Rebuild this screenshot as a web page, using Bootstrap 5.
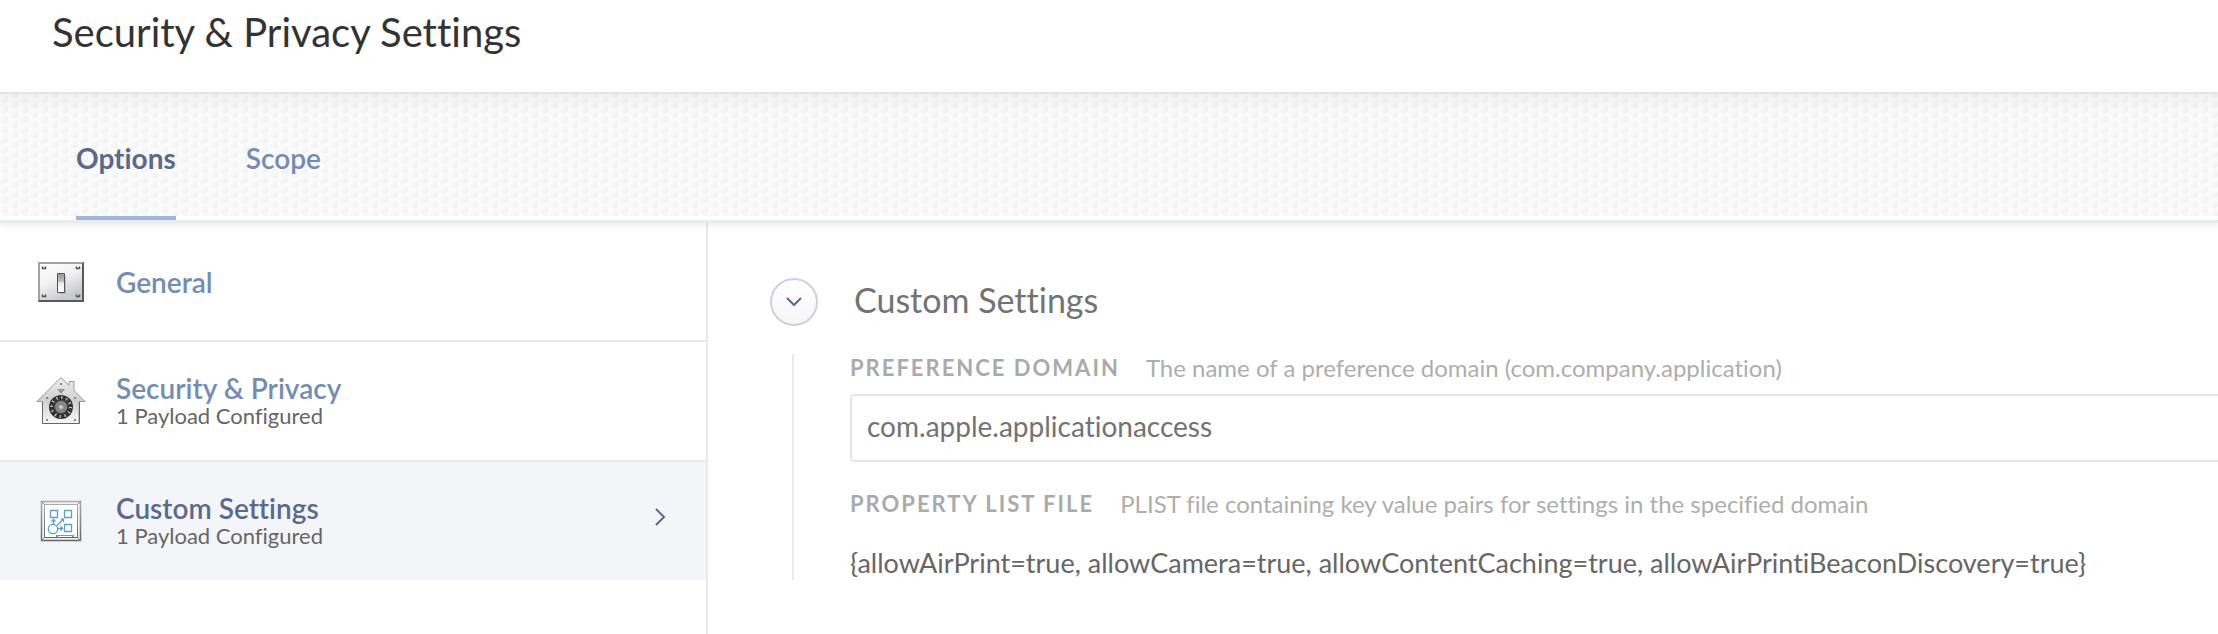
<!DOCTYPE html>
<html lang="en">
<head>
<meta charset="utf-8">
<meta name="viewport" content="width=device-width, initial-scale=1">
<title>Security &amp; Privacy Settings</title>
<link rel="stylesheet" href="https://cdn.jsdelivr.net/npm/bootstrap@5.3.0/dist/css/bootstrap.min.css">
<style>
body { font-family: Lato, "Open Sans", sans-serif; font-variant-ligatures: none; color: #666; background: #fff; }
.page-head { height: 94px; padding: 0 52px; border-bottom: 2px solid #e4e6ea; }
.page-head h1 { font-size: 40px; line-height: 64px; color: #333; font-weight: 400; }
.tab-strip {
  height: 129px; padding: 0 76px; gap: 70px; border-bottom: 3px solid #e7ebee;
  box-shadow: 0 3px 6px rgba(0,0,0,.07); position: relative;
  background:
    linear-gradient(#fff, #fff) 0 100% / 100% 4px no-repeat,
    linear-gradient(rgba(0,0,0,.035), rgba(0,0,0,0)) 0 0 / 100% 20px no-repeat,
    url("data:image/svg+xml,%3Csvg xmlns='http://www.w3.org/2000/svg' width='20' height='10'%3E%3Cdefs%3E%3ClinearGradient id='g' x2='1' y2='1'%3E%3Cstop stop-color='%23fff'/%3E%3Cstop offset='1' stop-color='%23efefef'/%3E%3C/linearGradient%3E%3C/defs%3E%3Crect width='20' height='10' fill='%23fbfbfb'/%3E%3Crect x='0' y='1' width='8' height='8' rx='3' fill='url(%23g)'/%3E%3Crect x='10' y='6' width='8' height='8' rx='3' fill='url(%23g)'/%3E%3Crect x='10' y='-4' width='8' height='8' rx='3' fill='url(%23g)'/%3E%3C/svg%3E");
}
.tab-strip .nav-link { padding: 0; line-height: 128px; height: 126px; font-size: 28px; font-weight: 600; color: #728db5; border-bottom: 4px solid transparent; }
.tab-strip .nav-link.active { color: #5a6a8c; font-weight: 700; border-bottom-color: #9db8d8; }
.side-nav { width: 708px; border-right: 2px solid #e7e9ee; }
.side-item { height: 120px; gap: 30px; padding: 0 40px 0 36px; border-bottom: 2px solid #e7e9ee; color: #666; text-decoration: none; }
.side-item:first-child { height: 119px; }
.side-item:last-child { height: 118px; border-bottom: 0; }
.side-item.current { background: #f4f5f9; }
.side-item .pic { width: 50px; height: 50px; }
.side-title { font-size: 28px; line-height: 30px; font-weight: 600; color: #728db5; }
.current .side-title { color: #5a6a8c; }
.side-sub { font-size: 22px; line-height: 26px; }
.panel { padding: 55px 0 46px 62px; }
.fold { width: 48px; height: 48px; border: 2px solid #ccd1dc; background: linear-gradient(#fff, #f6f6f6); border-radius: 50%; }
.panel h2 { font-size: 34px; line-height: 44px; font-weight: 400; color: #737373; padding-left: 36px; }
.fields { margin: 28px 0 0 22px; padding-left: 56px; border-left: 2px solid #e8eaee; }
.field-row { gap: 26px; height: 28px; }
.field-name { font-size: 22px; line-height: 28px; font-weight: 700; letter-spacing: 2px; color: #aaa; text-transform: uppercase; }
.field-help { font-size: 24px; line-height: 28px; color: #aeaeae; }
.field-box { height: 68px; margin-top: 12px; padding: 0 15px 4px; font-size: 28px; font-variant-ligatures: none; color: #737373; border: 2px solid #e1e4e9; border-right: 0; border-radius: 5px 0 0 5px; background: #fff; }
.plist { font-size: 27px; line-height: 34px; color: #666; }
</style>
</head>
<body class="d-flex flex-column min-vh-100">
<header class="page-head"><h1 class="m-0">Security &amp; Privacy Settings</h1></header>
<nav class="tab-strip nav flex-nowrap">
  <a class="nav-link active" href="#options" aria-current="page">Options</a>
  <a class="nav-link" href="#scope">Scope</a>
</nav>
<div class="d-flex align-items-stretch flex-grow-1">
  <nav class="side-nav flex-shrink-0">
    <a class="side-item d-flex align-items-center" href="#general">
      <svg class="pic" viewBox="0 0 50 50" aria-hidden="true">
        <defs>
          <linearGradient id="plate" x2=".5" y2="1"><stop stop-color="#fff"/><stop offset=".5" stop-color="#f2f2f3"/><stop offset="1" stop-color="#c8c9cb"/></linearGradient>
          <linearGradient id="lever" x2="0" y2="1"><stop stop-color="#999"/><stop offset=".4" stop-color="#bbb"/><stop offset=".5" stop-color="#eee"/><stop offset="1" stop-color="#fff"/></linearGradient>
        </defs>
        <path d="M2 5h46v40H2z" fill="#58595b"/><path d="M2 5h46l-2 2v36H4l-2 2z" fill="#a0a1a4"/><path d="M46 7l2-2v40H2l2-2h42z" fill="#58595b"/>
        <path d="M4 7h42v36H4z" fill="url(#plate)"/>
        <path d="M24 19h6v18h-6z" fill="#000" opacity=".16"/>
        <path d="M21.500 16.500h7v19h-7z" fill="url(#lever)" stroke="#555"/>
        <path d="M6.500 9.500v2h3v-2M40.500 9.500v2h3v-2M6.500 37.500v2h3v-2M40.500 37.500v2h3v-2" fill="none" stroke="#555" stroke-width="1.500"/>
      </svg>
      <span class="side-title">General</span>
    </a>
    <a class="side-item d-flex align-items-center" href="#security">
      <svg class="pic" viewBox="0 0 50 50" aria-hidden="true">
        <defs>
          <linearGradient id="wall" x2="0" y2="1"><stop stop-color="#eee"/><stop offset=".5" stop-color="#cfcfcf"/><stop offset="1" stop-color="#f8f8f8"/></linearGradient>
          <radialGradient id="knob"><stop stop-color="#e8e8e8"/><stop offset="1" stop-color="#777"/></radialGradient>
        </defs>
        <path d="M25 1.500l8 8v-4h5v9l11 11h-6v22H6.500v-22H1z" fill="url(#wall)" stroke="#999"/>
        <path d="M6.500 26v21.500h37V26" fill="none" stroke="#666"/>
        <path d="M21 13h8l-4 5z" fill="#999"/>
        <path d="M24 7h2v2h-2zM10 21h2v2h-2zM38 21h2v2h-2zM10 43h2v2h-2zM38 43h2v2h-2z" fill="#888"/>
        <circle cx="25" cy="31" r="12" fill="#333"/>
        <circle cx="25" cy="31" r="9.500" fill="none" stroke="#ccc" stroke-width="3" stroke-dasharray="1.200 3.774"/>
        <circle cx="25" cy="31" r="6.500" fill="#888" stroke="#444"/><circle cx="25" cy="31" r="3.500" fill="url(#knob)"/>
      </svg>
      <span class="d-flex flex-column"><span class="side-title">Security &amp; Privacy</span><span class="side-sub">1 Payload Configured</span></span>
    </a>
    <a class="side-item current d-flex align-items-center" href="#custom">
      <svg class="pic" viewBox="0 0 50 50" aria-hidden="true">
        <defs><linearGradient id="frame" x2="0" y2="1"><stop stop-color="#aaa"/><stop offset="1" stop-color="#666"/></linearGradient></defs>
        <path d="M5.500 5.500h39v39h-39z" fill="#f2f2f2" stroke="url(#frame)" stroke-width="1.500"/>
        <path d="M5 5l4 4M45 5l-4 4M5 45l4-4M45 45l-4-4" stroke="#888"/>
        <path d="M8.500 8.500h33v33h-33z" fill="#fff" stroke="url(#frame)"/>
        <g fill="none" stroke="#5aa0d6" stroke-width="1.300"><path d="M14.500 14.500h7v7h-7zM28.500 14.500h7v7h-7zM28.500 28.500h7v7h-7z"/><circle cx="17" cy="33" r="4.700"/><path d="M17.500 28v-4M21 29.500l5-5M22 32.500h4"/></g>
        <path d="M14.500 25.500l3-3 3 3zM24 22.500h4v4zM24.500 29.500l3 3-3 3zM20 39h18v2h-2v-1H22v1h-2z" fill="#5aa0d6"/>
      </svg>
      <span class="d-flex flex-column"><span class="side-title">Custom Settings</span><span class="side-sub">1 Payload Configured</span></span>
      <svg class="ms-auto mb-2" width="12" height="20" viewBox="0 0 12 20" fill="none" stroke="#5a6a8c" stroke-width="2" aria-hidden="true"><path d="M2 2l8 8-8 8"/></svg>
    </a>
  </nav>
  <main class="panel flex-grow-1">
    <div class="d-flex align-items-center">
      <button type="button" class="fold p-0 d-flex align-items-center justify-content-center" aria-label="Collapse Custom Settings" aria-expanded="true">
        <svg width="18" height="12" viewBox="0 0 18 12" fill="none" stroke="#5a6a8c" stroke-width="2" aria-hidden="true"><path d="M2 2l7 7 7-7"/></svg>
      </button>
      <h2 class="mt-0 mb-1">Custom Settings</h2>
    </div>
    <section class="fields">
      <div class="field-row d-flex align-items-center">
        <label class="field-name" for="domain">Preference Domain</label><span class="field-help">The name of a preference domain (com.company.application)</span>
      </div>
      <input class="field-box w-100 d-block" id="domain" type="text" value="com.apple.applicationaccess">
      <div class="field-row d-flex align-items-center mt-4 pt-2">
        <span class="field-name">Property List File</span><span class="field-help">PLIST file containing key value pairs for settings in the specified domain</span>
      </div>
      <p class="plist mt-4 mb-0 pt-2">{allowAirPrint=true, allowCamera=true, allowContentCaching=true, allowAirPrintiBeaconDiscovery=true}</p>
    </section>
  </main>
</div>
<script src="https://cdn.jsdelivr.net/npm/bootstrap@5.3.0/dist/js/bootstrap.bundle.min.js"></script>
</body>
</html>
